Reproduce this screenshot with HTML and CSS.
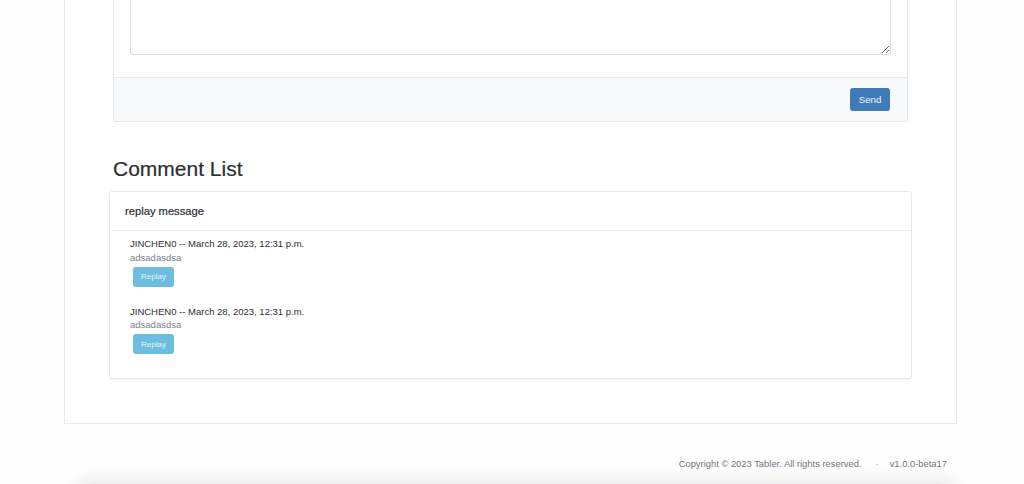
FILE: index.html
```html
<!DOCTYPE html>
<html lang="en">
<head>
<meta charset="utf-8">
<title>Comments</title>
<link rel="stylesheet" href="styles.css">
</head>
<body>
<div class="page">
  <div class="outer">
    <div class="card form-card">
      <div class="card-body">
        <textarea class="input"></textarea>
      </div>
      <div class="card-footer">
        <button class="btn btn-primary">Send</button>
      </div>
    </div>
    <h2 class="section-title">Comment List</h2>
    <div class="card comment-card">
      <div class="card-header">replay message</div>
      <div class="comment-body">
        <div class="comment">
          <div class="comment-meta">JINCHEN0 -- March 28, 2023, 12:31 p.m.</div>
          <div class="comment-text">adsadasdsa</div>
          <button class="btn btn-info">Replay</button>
        </div>
        <div class="comment">
          <div class="comment-meta">JINCHEN0 -- March 28, 2023, 12:31 p.m.</div>
          <div class="comment-text">adsadasdsa</div>
          <button class="btn btn-info">Replay</button>
        </div>
      </div>
    </div>
  </div>
  <footer class="footer">
    <span>Copyright © 2023 Tabler. All rights reserved.</span>
    <span class="dot">·</span>
    <span>v1.0.0-beta17</span>
  </footer>
</div>
<div class="dock"></div>
</body>
</html>
```
FILE: styles.css
```css
html, body {
  margin: 0;
  padding: 0;
}
body {
  background: #fdfdfd;
  font-family: "Liberation Sans", Arial, sans-serif;
  color: #333;
  height: 484px;
  overflow: hidden;
}
.page {
  margin-left: 64px;
  width: 893px;
}
.outer {
  margin-top: -100px;
  background: #fff;
  border: 1px solid #e9eaec;
  padding: 0 48px 44.4px;
}
.card {
  background: #fff;
  border: 1px solid #e4e6e9;
  border-radius: 3px;
}
.form-card .card-body {
  padding: 16px 16px 22px;
}
.input {
  display: block;
  box-sizing: border-box;
  width: 100%;
  height: 137px;
  border: 1px solid #dadcdf;
  border-radius: 3px;
  background: #fff;
  margin: 0;
}
.card-footer {
  background: #f8f9fa;
  border-top: 1px solid #e7e9ec;
  padding: 10px 17px 10px 16px;
  display: flex;
  justify-content: flex-end;
  border-radius: 0 0 3px 3px;
}
.btn {
  font-family: "Liberation Sans", Arial, sans-serif;
  border: none;
  border-radius: 3px;
  cursor: pointer;
}
.btn-primary {
  background: #3f7ab9;
  color: #f2f6fb;
  font-size: 9.7px;
  height: 23px;
  width: 40px;
  padding: 0;
}
.section-title {
  margin: 34px 0 9px;
  font-size: 21px;
  line-height: 26px;
  font-weight: 400;
  color: #2b2f33;
  -webkit-text-stroke: 0.2px #2b2f33;
}
.comment-card {
  margin: 0 -4px;
  border-color: #e8e9eb;
  box-shadow: 0 1px 2px rgba(0, 0, 0, 0.03);
}
.card-header {
  height: 38px;
  display: flex;
  align-items: center;
  padding: 0 15px;
  border-bottom: 1px solid #eceef0;
  font-size: 11.2px;
  color: #2a2d31;
  -webkit-text-stroke: 0.2px #2a2d31;
}
.comment-body {
  padding: 6.25px 20px 23.3px;
}
.comment {
  margin-bottom: 17.6px;
  font-size: 9.5px;
  line-height: 13.5px;
}
.comment:last-child {
  margin-bottom: 0;
}
.comment-meta {
  color: #2c2f33;
}
.comment-text {
  color: #7a7f86;
}
.btn-info {
  display: block;
  margin: 2.7px 0 0 3px;
  width: 41px;
  height: 20px;
  padding: 0;
  background: #6dbde0;
  color: #e3f2fa;
  font-size: 8px;
}
.footer {
  margin-top: 33.3px;
  padding-right: 10px;
  display: flex;
  justify-content: flex-end;
  font-size: 9.4px;
  line-height: 14px;
  color: #6f7580;
}
.dot {
  margin: 0 11px 0 14px;
  color: #b5b9bf;
}
.dock {
  position: fixed;
  left: 80px;
  right: 70px;
  bottom: -40px;
  height: 40px;
  background: #fff;
  box-shadow: 0 0 18px rgba(0, 0, 0, 0.13);
}
```
